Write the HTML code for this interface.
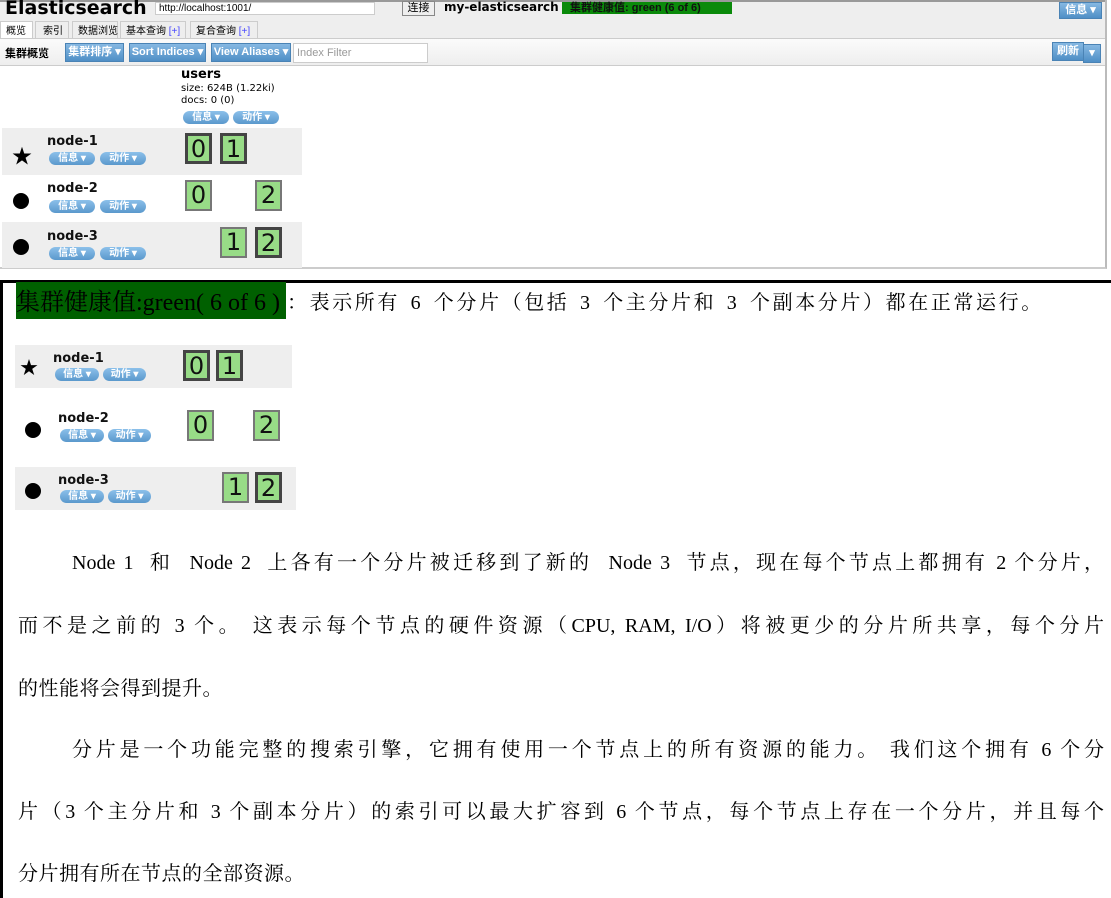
<!DOCTYPE html>
<html><head><meta charset="utf-8"><style>
*{margin:0;padding:0;box-sizing:border-box}
body{width:1111px;height:898px;position:relative;background:#fff;overflow:hidden;font-family:"Liberation Sans","Noto Sans CJK SC",sans-serif}
.a{position:absolute;white-space:nowrap}
.pill{position:absolute;height:13px;border-radius:7px;background:linear-gradient(#8cc0ea,#5a98cc);color:#fff;font-size:10px;line-height:13px;text-align:center;font-weight:bold;white-space:nowrap}
.btn{position:absolute;height:19px;background:linear-gradient(#86b8e2,#4f8fc6);color:#fff;font-size:11px;font-weight:bold;line-height:17px;text-align:center;border:1px solid #4a83b5;white-space:nowrap;overflow:hidden}
.tab{position:absolute;top:21px;height:19px;border:1px solid #ccc;border-bottom:none;font-size:10px;line-height:20px;padding-left:5px;white-space:nowrap;background:#eee}
.sh{position:absolute;width:27px;height:31px;background:#98dc87;font-size:24px;line-height:27px;text-align:center;color:#111;font-family:"DejaVu Sans",sans-serif}
.p{border:3px solid #444}.r{border:2px solid #777}
.nm{position:absolute;font-weight:bold;font-size:13px;color:#111;font-family:"DejaVu Sans",sans-serif}
.t{position:absolute;font-family:"Liberation Serif","Noto Serif CJK SC",serif;font-size:20px;color:#000;white-space:nowrap;line-height:24px}
.j{text-align:justify;text-align-last:justify;left:18px;width:1086px}
</style></head><body>
<div class="a" style="left:0;top:0;width:1107px;height:269px;border-right:2px solid #bbb;border-bottom:2px solid #ccc"></div>
<div class="a" style="left:0;top:0;width:1105px;height:40px;background:#eee;border-top:2px solid #999"></div>
<div class="a" style="left:5px;top:-3px;font-size:19px;font-weight:bold;font-family:'DejaVu Sans',sans-serif">Elasticsearch</div>
<div class="a" style="left:155px;top:2px;width:220px;height:13px;background:#fff;border:1px solid #ccc;font-size:10px;line-height:11px;padding-left:3px">http://localhost:1001/</div>
<div class="a" style="left:402px;top:1px;width:33px;height:15px;border:1px solid #888;background:#eee;font-size:11px;text-align:center;line-height:13px">连接</div>
<div class="a" style="left:444px;top:0;font-size:12px;font-weight:bold;font-family:'DejaVu Sans',sans-serif">my-elasticsearch</div>
<div class="a" style="left:562px;top:2px;width:170px;height:12px;background:#0a8a0a;font-size:11px;line-height:12px;padding-left:8px;font-weight:bold;color:#111">集群健康值: green (6 of 6)</div>
<div class="btn" style="left:1059px;top:2px;height:17px;line-height:15px;width:43px">信息 ▾</div>
<div class="tab" style="left:0;width:33px;background:#fff">概览</div>
<div class="tab" style="left:35px;width:34px;padding-left:7px">索引</div>
<div class="tab" style="left:72px;width:46px">数据浏览</div>
<div class="tab" style="left:120px;width:66px">基本查询 <span style="color:#44f">[+]</span></div>
<div class="tab" style="left:190px;width:68px">复合查询 <span style="color:#44f">[+]</span></div>
<div class="a" style="left:0;top:38px;width:1105px;height:28px;background:linear-gradient(#fbfbfb,#eee);border-top:1px solid #ccc;border-bottom:1px solid #ccc"></div>
<div class="a" style="left:5px;top:45px;font-size:11px;font-weight:bold">集群概览</div>
<div class="btn" style="left:65px;top:43px;width:59px">集群排序 ▾</div>
<div class="btn" style="left:129px;top:43px;width:77px">Sort Indices ▾</div>
<div class="btn" style="left:211px;top:43px;width:80px">View Aliases ▾</div>
<div class="a" style="left:293px;top:43px;width:135px;height:20px;border:1px solid #ccc;background:#fff;font-size:11px;color:#999;padding:3px 3px">Index Filter</div>
<div class="btn" style="left:1052px;top:42px;width:32px">刷新</div>
<div class="btn" style="left:1083px;top:44px;width:18px">▾</div>
<div class="a" style="left:181px;top:67px;font-size:13px;font-weight:bold;font-family:'DejaVu Sans',sans-serif">users</div>
<div class="a" style="left:181px;top:83px;font-size:10px;line-height:12px;font-family:'DejaVu Sans',sans-serif">size: 624B (1.22ki)<br>docs: 0 (0)</div>
<div class="pill" style="left:183px;top:111px;width:46px">信息 ▾</div>
<div class="pill" style="left:233px;top:111px;width:46px">动作 ▾</div>
<div class="a" style="left:2px;top:128px;width:300px;height:47px;background:#eee"></div>
<div class="a" style="left:2px;top:222px;width:300px;height:46px;background:#eee"></div>
<div class="a" style="left:12px;top:140px;font-size:20px">★</div>
<div class="a" style="left:13px;top:193px;width:16px;height:16px;border-radius:50%;background:#000"></div>
<div class="a" style="left:13px;top:239px;width:16px;height:16px;border-radius:50%;background:#000"></div>
<div class="nm" style="left:47px;top:134px">node-1</div><div class="pill" style="left:49px;top:152px;width:46px">信息 ▾</div><div class="pill" style="left:100px;top:152px;width:46px">动作 ▾</div>
<div class="nm" style="left:47px;top:181px">node-2</div><div class="pill" style="left:49px;top:200px;width:46px">信息 ▾</div><div class="pill" style="left:100px;top:200px;width:46px">动作 ▾</div>
<div class="nm" style="left:47px;top:229px">node-3</div><div class="pill" style="left:49px;top:247px;width:46px">信息 ▾</div><div class="pill" style="left:100px;top:247px;width:46px">动作 ▾</div>
<div class="sh p" style="left:185px;top:133px">0</div><div class="sh p" style="left:220px;top:133px">1</div>
<div class="sh r" style="left:185px;top:180px">0</div><div class="sh r" style="left:255px;top:180px">2</div>
<div class="sh r" style="left:220px;top:227px">1</div><div class="sh p" style="left:255px;top:227px">2</div>
<div class="a" style="left:0;top:280px;width:1111px;height:3px;background:#000"></div>
<div class="a" style="left:0;top:280px;width:3px;height:618px;background:#000"></div>
<div class="a" style="left:16px;top:282px;width:270px;height:37px;background:#006000"></div>
<div class="t" style="left:16px;top:289px;font-size:24px;line-height:28px">集群健康值:green( 6 of 6 )</div>
<div class="t" style="left:287px;top:291px;letter-spacing:2.6px;word-spacing:3px">：表示所有 6 个分片（包括 3 个主分片和 3 个副本分片）都在正常运行。</div>
<div class="a" style="left:15px;top:345px;width:277px;height:43px;background:#eee"></div>
<div class="a" style="left:15px;top:467px;width:281px;height:43px;background:#eee"></div>
<div class="a" style="left:20px;top:354px;font-size:18px">★</div>
<div class="a" style="left:25px;top:422px;width:16px;height:16px;border-radius:50%;background:#000"></div>
<div class="a" style="left:25px;top:483px;width:16px;height:16px;border-radius:50%;background:#000"></div>
<div class="nm" style="left:53px;top:351px">node-1</div><div class="pill" style="left:55px;top:368px;width:44px">信息 ▾</div><div class="pill" style="left:103px;top:368px;width:43px">动作 ▾</div>
<div class="nm" style="left:58px;top:411px">node-2</div><div class="pill" style="left:60px;top:429px;width:44px">信息 ▾</div><div class="pill" style="left:108px;top:429px;width:43px">动作 ▾</div>
<div class="nm" style="left:58px;top:473px">node-3</div><div class="pill" style="left:60px;top:490px;width:44px">信息 ▾</div><div class="pill" style="left:108px;top:490px;width:43px">动作 ▾</div>
<div class="sh p" style="left:183px;top:350px">0</div><div class="sh p" style="left:216px;top:350px">1</div>
<div class="sh r" style="left:187px;top:410px">0</div><div class="sh r" style="left:253px;top:410px">2</div>
<div class="sh r" style="left:222px;top:472px">1</div><div class="sh p" style="left:255px;top:472px">2</div>
<div class="t j" style="left:72px;width:1032px;top:551px">Node 1 &nbsp;和 &nbsp;Node 2 &nbsp;上各有一个分片被迁移到了新的 &nbsp;Node 3 &nbsp;节点，现在每个节点上都拥有 2 个分片，</div>
<div class="t j" style="top:614px">而不是之前的 3 个。 这表示每个节点的硬件资源（CPU, RAM, I/O）将被更少的分片所共享，每个分片</div>
<div class="t" style="left:18px;top:677px;letter-spacing:0.5px">的性能将会得到提升。</div>
<div class="t j" style="left:72px;width:1032px;top:738px">分片是一个功能完整的搜索引擎，它拥有使用一个节点上的所有资源的能力。 我们这个拥有 6 个分</div>
<div class="t j" style="top:800px">片（3 个主分片和 3 个副本分片）的索引可以最大扩容到 6 个节点，每个节点上存在一个分片，并且每个</div>
<div class="t" style="left:18px;top:862px;letter-spacing:0.5px">分片拥有所在节点的全部资源。</div>
</body></html>
